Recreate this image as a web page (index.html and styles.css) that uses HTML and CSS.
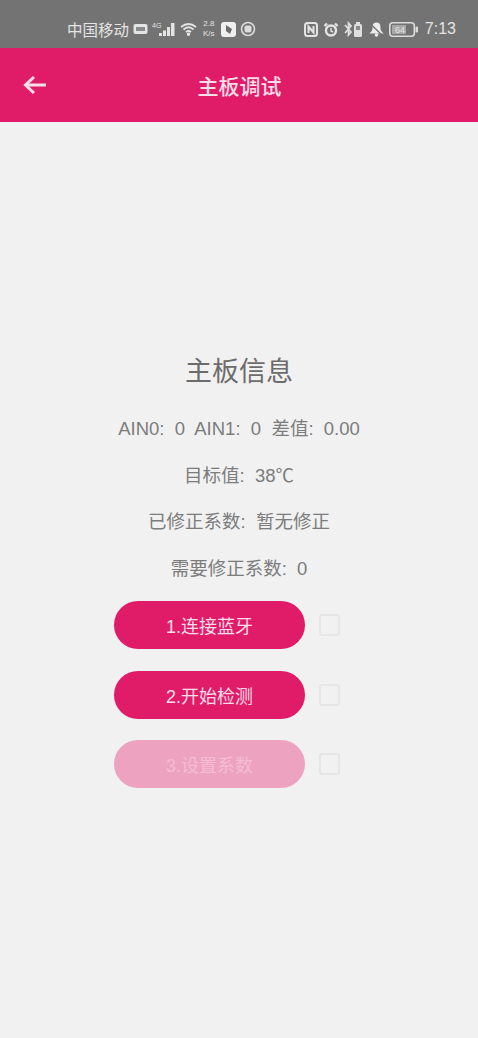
FILE: index.html
```html
<!DOCTYPE html>
<html lang="zh-CN">
<head>
    <meta charset="UTF-8">
    <meta name="viewport" content="width=device-width, initial-scale=1.0">
    <title>主板调试</title>
    <link rel="stylesheet" href="styles.css">
</head>
<body>
    <div class="status-bar">
        <div class="status-left">
            <span class="carrier">中国移动</span>
            <svg class="icon" width="15" height="12" viewBox="0 0 15 12"><rect x="0.5" y="1" width="14" height="10" rx="2" fill="#e4e4e4"/><rect x="3" y="4" width="9" height="4" fill="#8a8a8a"/></svg>
            <svg class="icon signal" width="24" height="15" viewBox="0 0 24 15"><text x="0" y="6" font-size="7" fill="#e4e4e4" font-family="Liberation Sans">4G</text><rect x="7" y="11" width="3" height="3" fill="#e4e4e4"/><rect x="11" y="8.500" width="3" height="5.500" fill="#e4e4e4"/><rect x="15" y="5" width="3" height="9" fill="#e4e4e4"/><rect x="19" y="1" width="3.500" height="13" fill="#e4e4e4"/></svg>
            <svg class="icon" width="17" height="14" viewBox="0 0 17 14" fill="none" stroke="#e4e4e4" stroke-width="1.800"><path d="M1 5 Q8.500 -1 16 5"/><path d="M3.500 7.500 Q8.500 3 13.500 7.500"/><path d="M6 10 Q8.500 8 11 10"/><circle cx="8.500" cy="12.300" r="0.800" fill="#e4e4e4"/></svg>
            <div class="speed"><span>2.8</span><span>K/s</span></div>
            <svg class="icon" width="15" height="15" viewBox="0 0 15 15"><rect width="15" height="15" rx="3" fill="#efefef"/><path d="M5 3 L11 7 L9 12 L5 9 Z" fill="#6d6d6d"/></svg>
            <svg class="icon" width="16" height="16" viewBox="0 0 16 16" fill="none" stroke="#dcdcdc"><circle cx="8" cy="8" r="6.500" stroke-width="1.600"/><rect x="4.500" y="4.500" width="7" height="7" rx="2" fill="#dcdcdc" stroke="none"/></svg>
        </div>
        <div class="status-right">
            <svg class="icon" width="14" height="15" viewBox="0 0 14 15" fill="none" stroke="#e4e4e4" stroke-width="2"><rect x="1" y="1" width="12" height="13" rx="2.500"/><path d="M4.500 11 V4.500 L9.500 10.500 V4"/></svg>
            <svg class="icon" width="16" height="15" viewBox="0 0 16 15" fill="none" stroke="#e4e4e4" stroke-width="2.400"><circle cx="8" cy="8.500" r="5"/><path d="M8 6 V9 L10 10" stroke-width="1.400"/><path d="M1.500 4 L4 1.500 M14.500 4 L12 1.500"/></svg>
            <svg class="icon" width="20" height="16" viewBox="0 0 20 16" fill="none" stroke="#dedede" stroke-width="1.700"><path d="M1 4 L7 11 L4.500 14 V2 L7 5 L1 12"/><rect x="10" y="3" width="8" height="13" rx="1.500" fill="#dedede" stroke="none"/><rect x="12" y="1" width="4" height="3" fill="#dedede" stroke="none"/><rect x="12" y="5" width="4" height="4" fill="#8a8a8a" stroke="none"/></svg>
            <svg class="icon" width="15" height="15" viewBox="0 0 15 15"><path d="M7.500 0.500 C3.500 0.500 3.500 4 3.500 6.500 C3.500 9 1.500 10 0.500 11.500 H14.500 C13.500 10 11.500 9 11.500 6.500 C11.500 4 11.500 0.500 7.500 0.500 Z" fill="#ececec"/><path d="M1.500 2 L13.500 13.500" stroke="#737373" stroke-width="1.300"/><circle cx="7.500" cy="13" r="1.800" fill="#ececec"/></svg>
            <svg class="icon" width="29" height="15" viewBox="0 0 29 15" fill="none"><rect x="0.800" y="0.800" width="24.500" height="13.400" rx="3" stroke="#dcdcdc" stroke-width="1.600"/><rect x="3" y="3" width="14" height="9" fill="#a8a8a8"/><text x="6" y="10.500" font-size="9" fill="#e4e4e4" font-family="Liberation Sans">64</text><rect x="26.500" y="4.500" width="2.500" height="6" rx="1" fill="#dcdcdc"/></svg>
            <span class="clock">7:13</span>
        </div>
    </div>

    <header class="app-bar">
        <svg class="back" width="24" height="20" viewBox="0 0 24 20" fill="none" stroke="#fbdde8" stroke-width="3"><path d="M23 10 H3"/><path d="M11 2 L2.500 10 L11 18"/></svg>
        <h1 class="app-title">主板调试</h1>
    </header>

    <main class="content">
        <h2 class="info-title">主板信息</h2>
        <p class="info-row">AIN0:&nbsp; 0&nbsp; AIN1:&nbsp; 0&nbsp; 差值:&nbsp; 0.00</p>
        <p class="info-row">目标值:&nbsp; 38℃</p>
        <p class="info-row">已修正系数:&nbsp; 暂无修正</p>
        <p class="info-row">需要修正系数:&nbsp; 0</p>

        <div class="steps">
            <div class="step">
                <button class="step-button">1.连接蓝牙</button>
                <span class="check"></span>
            </div>
            <div class="step">
                <button class="step-button">2.开始检测</button>
                <span class="check"></span>
            </div>
            <div class="step">
                <button class="step-button disabled">3.设置系数</button>
                <span class="check"></span>
            </div>
        </div>
    </main>
</body>
</html>
```

FILE: styles.css
```css
* {
    margin: 0;
    padding: 0;
    box-sizing: border-box;
}

body {
    font-family: "Liberation Sans", "Noto Sans CJK SC", sans-serif;
    width: 100%;
    height: 100vh;
    overflow: hidden;
    background-color: #f1f1f1;
}

.status-bar {
    height: 48px;
    padding: 10px 22px 0 67px;
    background-color: #737373;
    color: #e4e4e4;
    display: flex;
    align-items: center;
    justify-content: space-between;
}

.status-left,
.status-right {
    display: flex;
    align-items: center;
}

.status-left {
    gap: 4px;
}

.status-right {
    gap: 5px;
}

.icon {
    flex: none;
}

.carrier {
    font-size: 15.500px;
}

.speed {
    display: flex;
    flex-direction: column;
    align-items: center;
    font-size: 8px;
    line-height: 10px;
    margin: 0 2px;
}

.clock {
    font-size: 16px;
    margin-left: 2px;
}

.app-bar {
    height: 74px;
    background-color: #e01c68;
    display: flex;
    align-items: center;
    justify-content: center;
    position: relative;
}

.back {
    position: absolute;
    left: 23px;
    top: 27px;
}

.app-title {
    font-size: 21px;
    font-weight: 500;
    color: #fbdde8;
    margin-left: 1px;
}

.content {
    padding-top: 231px;
    display: flex;
    flex-direction: column;
    align-items: center;
    color: #7c7c7c;
}

.info-title {
    font-size: 27px;
    font-weight: 400;
    line-height: 38px;
    margin-bottom: 26px;
    color: #6c6c6c;
}

.info-row {
    font-size: 18.500px;
    line-height: 24px;
    margin-bottom: 22.500px;
}

.steps {
    margin-top: -2px;
    margin-right: 24px;
    display: flex;
    flex-direction: column;
    gap: 21.500px;
}

.step {
    display: flex;
    align-items: center;
    gap: 14px;
}

.step-button {
    width: 191px;
    height: 48px;
    border: none;
    border-radius: 24px;
    background-color: #e01c68;
    color: #fbdde8;
    font-family: inherit;
    font-size: 18px;
}

.step-button.disabled {
    background-color: #eda3c0;
    color: #f3bdd2;
}

.check {
    width: 21px;
    height: 22px;
    border: 2px solid #e6e6e6;
    border-radius: 3px;
}
```
